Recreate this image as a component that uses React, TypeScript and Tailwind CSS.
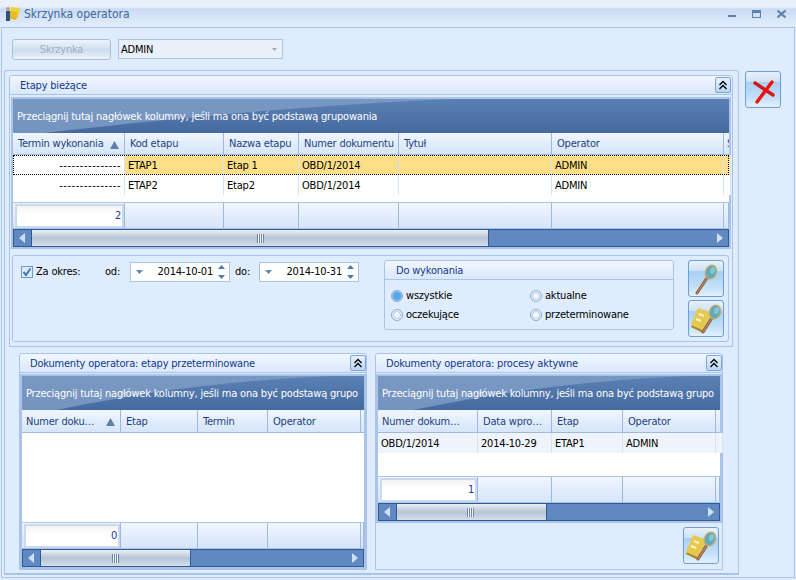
import React from "react";

const Lens = ({ hx1, hy1, hx2, hy2, cx, cy }: { hx1: number; hy1: number; hx2: number; hy2: number; cx: number; cy: number }) => (
  <>
    <line x1={hx1} y1={hy1} x2={hx2} y2={hy2} stroke="#8f5a3c" strokeWidth="3" strokeLinecap="round" />
    <line x1={hx1} y1={hy1} x2={hx2} y2={hy2} stroke="#c99a78" strokeWidth="1" strokeLinecap="round" />
    <ellipse cx={cx} cy={cy} rx="5.5" ry="7" transform={`rotate(20 ${cx} ${cy})`} fill="#5fa9bd" stroke="#c4ad6e" strokeWidth="1.3" />
    <ellipse cx={cx + 1} cy={cy - 2} rx="2.5" ry="3.5" transform={`rotate(20 ${cx} ${cy})`} fill="#86c4d2" />
  </>
);

const IconButton = ({ kind }: { kind: "x" | "lens" | "book" }) => (
  <div className="w-[36px] h-[37px] rounded-[3px] border border-[#6f9dd6] bg-[linear-gradient(#e9f2fc_0%,#cfe1f4_28%,#a8d0f3_29%,#c0def7_70%,#e2f1fc_100%)] shrink-0">
    <svg width="34" height="35" viewBox="0 0 34 35">
      {kind === "x" && (
        <g strokeWidth="3.4" strokeLinecap="round">
          <line x1="9" y1="11" x2="27" y2="23" stroke="#d01a1a" />
          <line x1="26" y1="10" x2="11" y2="30" stroke="#f01010" />
        </g>
      )}
      {kind === "lens" && <Lens hx1={8} hy1={32} hx2={18} hy2={17} cx={22} cy={11} />}
      {kind === "book" && (
        <>
          <polygon points="2,26 14,32 22,20 21,17 14,29 3,24" fill="#a98a28" />
          <polygon points="9,7 23,12 14,29 2,24" fill="#e6c84e" />
          <line x1="10" y1="13" x2="15" y2="15" stroke="#fff6c8" strokeWidth="2" />
          <line x1="7" y1="18" x2="12" y2="20" stroke="#fff6c8" strokeWidth="2" />
          <Lens hx1={14} hy1={31} hx2={23} hy2={17} cx={26} cy={11} />
        </>
      )}
    </svg>
  </div>
);

const Collapse = () => (
  <div className="w-[16px] h-[16px] rounded-[2px] border border-[#7fa5d6] bg-[linear-gradient(#e6f0fc,#bcd6f3)] flex items-center justify-center shrink-0">
    <svg width="10" height="10" viewBox="0 0 10 10" fill="none" stroke="#000" strokeWidth="1.3">
      <path d="M1.5 5 5 1.5 8.5 5M1.5 9 5 5.5 8.5 9" />
    </svg>
  </div>
);

const PanelHeader = ({ title, pr }: { title: string; pr: string }) => (
  <div className={`h-[19px] pl-[10px] ${pr} flex items-center justify-between bg-[linear-gradient(#f1f7fe,#d9e8fb)] border-b border-[#a9c4e8] text-[#15378f] rounded-t-[3px]`}>
    <span className="pt-[3px]">{title}</span>
    <Collapse />
  </div>
);

const Arrow = ({ dir }: { dir: "l" | "r" }) => (
  <div className="w-[17px] h-full flex items-center justify-center shrink-0">
    <svg width="7" height="10" viewBox="0 0 7 10">
      <polygon points={dir === "l" ? "6,0 6,10 0,5" : "1,0 1,10 7,5"} fill="#cfe0f5" />
    </svg>
  </div>
);

const Scrollbar = ({ thumb, grip }: { thumb: string; grip: string }) => (
  <div className="h-[18px] flex items-stretch bg-[#6089c2] border border-[#2f5a94] overflow-hidden shrink-0">
    <Arrow dir="l" />
    <div className={`${thumb} shrink-0 border-x border-[#2f5a94] bg-[linear-gradient(#eaeff4,#b6c5d6_50%,#d5dee8)] flex items-center`}>
      <div className={`${grip} w-[7px] h-[9px] bg-[repeating-linear-gradient(90deg,#6f88a6_0px,#6f88a6_1px,#eef2f6_1px,#eef2f6_2px)]`} />
    </div>
    <div className="flex-1" />
    <Arrow dir="r" />
  </div>
);

const Triangle = () => (
  <svg width="9" height="8" viewBox="0 0 9 8" className="shrink-0">
    <polygon points="4.5,0 9,8 0,8" fill="#5f7fa8" />
  </svg>
);

const Banner = ({ text, curve }: { text: string; curve: string }) => (
  <div className="relative h-[34px] bg-[linear-gradient(#5b80b4,#456a9f)] flex items-center overflow-hidden shrink-0">
    <svg className="absolute inset-0 w-full h-full" viewBox="0 0 340 34" preserveAspectRatio="none">
      <path d={curve} fill="#7e9bc5" fillOpacity="0.85" />
    </svg>
    <span className="relative pl-[4px] pt-[2px] text-white whitespace-nowrap">{text}</span>
  </div>
);

type Col = { w: string; title: string; sort?: boolean; pl?: string };
type Row = { cells: string[]; selected?: boolean; firstRight?: boolean; tint?: boolean };

const Grid = ({
  cols, rows, banner, total, thumb, grip, body, outer, curve, firstFoot, head,
}: {
  cols: Col[]; rows: Row[]; banner: string; total: string; thumb: string; grip: string;
  body: string; outer: string; curve: string; firstFoot: string; head: string;
}) => (
  <div className={`${outer} border-2 border-[#a9c4e8] bg-white flex flex-col`}>
    <Banner text={banner} curve={curve} />
    <div className={`flex ${head} border-b border-[#9fb9dd] shrink-0 bg-[linear-gradient(#f0f6fe,#d5e5fa)] overflow-hidden`}>
      {cols.map((c, i) => (
        <div key={i} className={`${c.w} ${c.pl ?? "pl-[5px]"} shrink-0 border-r border-[#9fb9dd] pr-[5px] pt-[2px] flex items-center justify-between text-[#1f3f80] whitespace-nowrap overflow-hidden`}>
          <span>{c.title}</span>
          {c.sort && <Triangle />}
        </div>
      ))}
    </div>
    <div className={`${body} shrink-0 bg-white`}>
      {rows.map((r, i) => (
        <div key={i} className={`flex h-[20px] text-black ${r.selected ? "outline-1 outline-dotted outline-black -outline-offset-1" : ""}`}>
          {r.cells.map((t, j) => (
            <div key={j} className={`${cols[j].w} shrink-0 border-r border-[#d6e3f4] px-[3px] pt-[2px] flex items-center whitespace-nowrap overflow-hidden ${r.selected && !(r.firstRight && j === 0) ? "bg-[#fedf87]" : r.tint ? "bg-[#eff3fb]" : "bg-white"} ${r.firstRight && j === 0 ? "justify-end tracking-[0.55px]" : ""}`}>
              {t}
            </div>
          ))}
        </div>
      ))}
    </div>
    <div className="flex h-[27px] border-y border-[#a9c4e8] shrink-0 bg-[linear-gradient(#f0f6fe,#d5e5fa)] overflow-hidden">
      {cols.map((c, i) => (
        <div key={i} className={`${c.w} shrink-0 border-r border-[#9fb9dd] flex`}>
          {i === 0 && (
            <div className={`${firstFoot} mt-[1px] ml-[2px] border-2 border-[#c9daf0] bg-[linear-gradient(#f2f2f2,#fff_40%)] text-right pr-[1px] leading-[20px] text-[#1c3a9a]`}>{total}</div>
          )}
        </div>
      ))}
    </div>
    <Scrollbar thumb={thumb} grip={grip} />
  </div>
);

const Radio = ({ label, on }: { label: string; on?: boolean }) => (
  <div className="flex items-center gap-[3px] h-[19px]">
    <span className={`w-[12px] h-[12px] rounded-full border border-[#8aa9d0] flex items-center justify-center ${on ? "bg-[#9cc8ee]" : "bg-[#eaf1fa]"}`}>
      <span className={`w-[8px] h-[8px] rounded-full ${on ? "bg-[#58a7e4]" : "border border-[#b4c9e4] bg-[#f6f9fd]"}`} />
    </span>
    <span className="text-black pt-[1px]">{label}</span>
  </div>
);

const DateField = ({ value }: { value: string }) => (
  <div className="w-[100px] h-[20px] border border-[#a9c4e8] bg-white flex items-center pl-[5px] pr-[4px] text-black">
    <svg width="7" height="4" viewBox="0 0 7 4"><polygon points="0,0 7,0 3.5,4" fill="#5f86bb" /></svg>
    <span className="flex-1 text-right pr-[5px] pt-[1px]">{value}</span>
    <svg width="7" height="14" viewBox="0 0 7 14">
      <polygon points="0,4 7,4 3.5,0" fill="#4d7bb8" />
      <polygon points="0,10 7,10 3.5,14" fill="#4d7bb8" />
    </svg>
  </div>
);

const TitleIcon = () => (
  <svg width="16" height="18" viewBox="0 0 16 18" className="shrink-0 ml-[5px]">
    <polygon points="6,2 15,3 13,13 5,14" fill="#f0cf3a" />
    <polygon points="5,6 12,7 11,15 5,14" fill="#e6b92a" />
    <circle cx="3" cy="4" r="2" fill="#c99a78" />
    <rect x="1" y="6" width="4" height="10" fill="#33507e" />
  </svg>
);

const App = () => (
  <div className="w-[796px] h-[580px] overflow-hidden flex flex-col bg-[#dfecfd] font-['DejaVu_Sans_Condensed','DejaVu_Sans',sans-serif] font-stretch-condensed text-[11px] tracking-[-0.2px]">
    <div className="h-[27px] shrink-0 flex items-center gap-[3px] bg-[linear-gradient(#e9f1fb_0px,#e6effb_7px,#c9dcf4_9px,#e2edfc_27px)]">
      <TitleIcon />
      <span className="text-[#3f659b] text-[12px] tracking-normal flex-1">Skrzynka operatora</span>
      <div className="flex items-center gap-[16px] pr-[10px]">
        <div className="w-[8px] h-[2px] bg-[#5f80ab] mt-[4px]" />
        <div className="w-[9px] h-[8px] border border-[#5f80ab] border-t-[3px]" />
        <svg width="9" height="8" viewBox="0 0 9 8" stroke="#5f80ab" strokeWidth="2"><path d="M0.5 0.5 8.5 7.5M8.5 0.5 0.5 7.5" /></svg>
      </div>
    </div>

    <div className="h-[551px] mx-[1px] border border-[#a9c4e8] shrink-0 flex flex-col">
      <div className="flex items-center h-[42px] pl-[10px] shrink-0">
        <div className="w-[99px] h-[21px] pt-[2px] rounded-[3px] border border-[#a9bfd8] bg-[linear-gradient(#eef4fc,#cdddee_55%,#edf3fb)] flex items-center justify-center text-[#a0aebd]">Skrzynka</div>
        <div className="ml-[7px] w-[165px] h-[20px] border border-[#a9c4e8] bg-[#e9f0fa] flex items-center pl-[2px] pr-[5px] text-black justify-between">
          <span className="pt-[2px]">ADMIN</span>
          <svg width="5" height="3" viewBox="0 0 5 3"><polygon points="0,0 5,0 2.5,3" fill="#9aa9bb" /></svg>
        </div>
      </div>

      <div className="flex flex-1">
        <div className="ml-[2px] w-[735px] h-[505px] border border-b-2 border-[#a9c4e8] rounded-t-[3px] flex flex-col pl-[4px]">
          <div className="mt-[4px] w-[724px] h-[272px] border border-[#a9c4e8] rounded-t-[3px] shrink-0">
            <PanelHeader title="Etapy bieżące" pr="pr-[1px]" />
            <Grid
              outer="ml-[1px] mt-[2px] w-[720px] h-[152px]"
              banner="Przeciągnij tutaj nagłówek kolumny, jeśli ma ona być podstawą grupowania"
              curve="M0 0H210C150 5 80 18 15 34H0Z"
              total="2"
              thumb="w-[458px]"
              grip="ml-[225px]"
              body="h-[47px]"
              head="h-[22px]"
              firstFoot="w-[109px]"
              cols={[
                { w: "w-[112px]", title: "Termin wykonania", sort: true },
                { w: "w-[99px]", title: "Kod etapu" },
                { w: "w-[75px]", title: "Nazwa etapu" },
                { w: "w-[100px]", title: "Numer dokumentu" },
                { w: "w-[153px]", title: "Tytuł" },
                { w: "w-[172px]", title: "Operator" },
                { w: "w-[5px]", title: "S", pl: "pl-[3px]" },
              ]}
              rows={[
                { cells: ["---------------", "ETAP1", "Etap 1", "OBD/1/2014", "", "ADMIN", ""], selected: true, firstRight: true },
                { cells: ["---------------", "ETAP2", "Etap2", "OBD/1/2014", "", "ADMIN", ""], firstRight: true },
              ]}
            />
            <div className="ml-[2px] mt-[6px] w-[717px] h-[87px] border border-[#a9c4e8] rounded-[3px] flex">
              <div className="w-[371px] shrink-0 pt-[6px] pl-[8px]">
                <div className="flex items-center h-[20px]">
                  <div className="w-[12px] h-[12px] border border-[#6e9bd3] bg-[#dcebfb] flex items-center justify-center shrink-0">
                    <svg width="10" height="10" viewBox="0 0 10 10" fill="none" stroke="#4a78b5" strokeWidth="2"><path d="M1.5 5 4 8 8.5 1.5" /></svg>
                  </div>
                  <span className="ml-[3px] w-[69px] shrink-0 pt-[1px] text-black">Za okres:</span>
                  <span className="w-[25px] shrink-0 pt-[1px] text-black">od:</span>
                  <DateField value="2014-10-01" />
                  <span className="w-[29px] shrink-0 pl-[5px] pt-[1px] text-black">do:</span>
                  <DateField value="2014-10-31" />
                </div>
              </div>
              <div className="mt-[4px] w-[290px] h-[70px] border border-[#a9c4e8] rounded-[3px] shrink-0">
                <div className="h-[19px] pl-[11px] pt-[2px] flex items-center border-b border-[#a9c4e8] text-[#15378f] bg-[linear-gradient(#f1f7fe,#d9e8fb)] rounded-t-[3px]">Do wykonania</div>
                <div className="grid grid-cols-[139px_1fr] pl-[6px] pt-[6px]">
                  <Radio label="wszystkie" on />
                  <Radio label="aktualne" />
                  <Radio label="oczekujące" />
                  <Radio label="przeterminowane" />
                </div>
              </div>
              <div className="ml-[14px] mt-[4px] flex flex-col gap-[3px] shrink-0">
                <IconButton kind="lens" />
                <IconButton kind="book" />
              </div>
            </div>
          </div>

          <div className="flex mt-[6px] ml-[10px] gap-[8px]">
            <div className="w-[348px] h-[217px] border border-[#a9c4e8] rounded-t-[3px] shrink-0">
              <PanelHeader title="Dokumenty operatora: etapy przeterminowane" pr="pr-0" />
              <Grid
                outer="mt-[1px] w-[346px] h-[195px]"
                banner="Przeciągnij tutaj nagłówek kolumny, jeśli ma ona być podstawą grupo"
                curve="M0 0H310C210 4 120 16 35 34H0Z"
                total="0"
                thumb="w-[151px]"
                grip="ml-[71px]"
                body="h-[89px]"
                head="h-[23px]"
                firstFoot="w-[96px]"
                cols={[
                  { w: "w-[99px]", title: "Numer doku…", sort: true, pl: "pl-[4px]" },
                  { w: "w-[77px]", title: "Etap" },
                  { w: "w-[70px]", title: "Termin" },
                  { w: "w-[93px]", title: "Operator" },
                  { w: "w-[3px]", title: "", pl: "pl-0" },
                ]}
                rows={[]}
              />
            </div>
            <div className="w-[348px] h-[217px] border border-[#a9c4e8] rounded-t-[3px] shrink-0 flex flex-col">
              <PanelHeader title="Dokumenty operatora: procesy aktywne" pr="pr-0" />
              <Grid
                outer="mt-[1px] w-[346px] h-[149px]"
                banner="Przeciągnij tutaj nagłówek kolumny, jeśli ma ona być podstawą grupo"
                curve="M0 0H310C210 4 120 16 35 34H0Z"
                total="1"
                thumb="w-[151px]"
                grip="ml-[70px]"
                body="h-[43px]"
                head="h-[23px]"
                firstFoot="w-[97px]"
                cols={[
                  { w: "w-[100px]", title: "Numer dokum…", pl: "pl-[4px]" },
                  { w: "w-[74px]", title: "Data wpro…" },
                  { w: "w-[71px]", title: "Etap" },
                  { w: "w-[93px]", title: "Operator" },
                  { w: "w-[4px]", title: "", pl: "pl-0" },
                ]}
                rows={[{ cells: ["OBD/1/2014", "2014-10-29", "ETAP1", "ADMIN", ""], tint: true }]}
              />
              <div className="flex justify-end pr-[3px] pt-[4px]">
                <IconButton kind="book" />
              </div>
            </div>
          </div>
        </div>
        <div className="ml-[6px] mt-[1px]">
          <IconButton kind="x" />
        </div>
      </div>
    </div>
  </div>
);

export default App;
